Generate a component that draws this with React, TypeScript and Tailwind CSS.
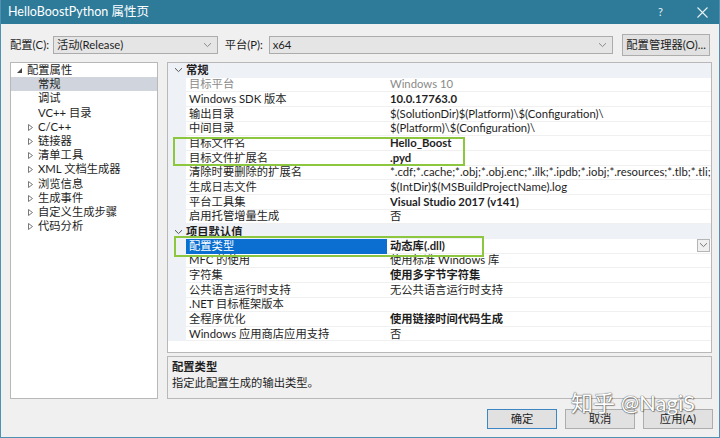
import React from "react";

const FONT = 'Lato, "Noto Sans CJK SC", sans-serif';

type Prop = { n: string; v: string; b?: boolean; g?: boolean; sel?: boolean };

const general: Prop[] = [
  { n: "目标平台", v: "Windows 10", g: true },
  { n: "Windows SDK 版本", v: "10.0.17763.0", b: true },
  { n: "输出目录", v: "$(SolutionDir)$(Platform)\\$(Configuration)\\" },
  { n: "中间目录", v: "$(Platform)\\$(Configuration)\\" },
  { n: "目标文件名", v: "Hello_Boost", b: true },
  { n: "目标文件扩展名", v: ".pyd", b: true },
  { n: "清除时要删除的扩展名", v: "*.cdf;*.cache;*.obj;*.obj.enc;*.ilk;*.ipdb;*.iobj;*.resources;*.tlb;*.tli;*.tlh;*.tmp;*.rsp" },
  { n: "生成日志文件", v: "$(IntDir)$(MSBuildProjectName).log" },
  { n: "平台工具集", v: "Visual Studio 2017 (v141)", b: true },
  { n: "启用托管增量生成", v: "否" },
];

const defaults: Prop[] = [
  { n: "配置类型", v: "动态库(.dll)", b: true, sel: true },
  { n: "MFC 的使用", v: "使用标准 Windows 库" },
  { n: "字符集", v: "使用多字节字符集", b: true },
  { n: "公共语言运行时支持", v: "无公共语言运行时支持" },
  { n: ".NET 目标框架版本", v: "" },
  { n: "全程序优化", v: "使用链接时间代码生成", b: true },
  { n: "Windows 应用商店应用支持", v: "否" },
];

function Chevron({ color = "#7a7a7a" }: { color?: string }) {
  return (
    <svg width="9" height="6" viewBox="0 0 9 6">
      <path d="M1 1.2 L4.5 4.6 L8 1.2" fill="none" stroke={color} strokeWidth="1" />
    </svg>
  );
}

function Header({ t }: { t: string }) {
  return (
    <div className="flex items-center h-[14.67px] bg-[#eef1f6] shrink-0">
      <div className="w-[18px] flex justify-center pl-[2px]">
        <Chevron color="#555" />
      </div>
      <span className="font-bold text-[#1e1e1e]">{t}</span>
    </div>
  );
}

function Row({ p }: { p: Prop }) {
  return (
    <div className="flex h-[14.67px] shrink-0">
      <div className="w-[18px] bg-[#eef1f6] shrink-0" />
      <div
        className={
          "w-[201px] shrink-0 pl-[3px] flex items-center whitespace-nowrap overflow-hidden border-b " +
          (p.sel ? "bg-[#0a6fd1] text-white border-[#0a6fd1]" : "border-[#f0f0f0] ") +
          (p.g ? "text-[#8a8a8a]" : p.sel ? "" : "text-[#1e1e1e]")
        }
      >
        {p.n}
      </div>
      <div
        className={
          "flex-1 min-w-0 pl-[3px] flex items-center whitespace-nowrap overflow-hidden border-b border-[#f0f0f0] relative " +
          (p.g ? "text-[#8a8a8a] " : "text-[#1e1e1e] ") +
          (p.b ? "font-bold" : "")
        }
      >
        {p.v}
        {p.sel && (
          <div className="absolute right-[1px] top-[0px] w-[13px] h-[13px] border border-[#b5b5b5] bg-[#f0f0f0] flex items-center justify-center">
            <Chevron color="#777" />
          </div>
        )}
      </div>
    </div>
  );
}

const tree: { t: string; kind: "open" | "closed" | "leaf"; sel?: boolean }[] = [
  { t: "配置属性", kind: "open" },
  { t: "常规", kind: "leaf", sel: true },
  { t: "调试", kind: "leaf" },
  { t: "VC++ 目录", kind: "leaf" },
  { t: "C/C++", kind: "closed" },
  { t: "链接器", kind: "closed" },
  { t: "清单工具", kind: "closed" },
  { t: "XML 文档生成器", kind: "closed" },
  { t: "浏览信息", kind: "closed" },
  { t: "生成事件", kind: "closed" },
  { t: "自定义生成步骤", kind: "closed" },
  { t: "代码分析", kind: "closed" },
];

function Btn({ t, def }: { t: string; def?: boolean }) {
  return (
    <div
      className={
        "w-[70px] h-[20px] flex items-center justify-center bg-[#e1e1e1] border " +
        (def ? "border-[#3c86c4]" : "border-[#adadad]")
      }
    >
      {t}
    </div>
  );
}

export default function App() {
  return (
    <div
      className="w-[720px] h-[438px] flex flex-col bg-[#f0f0f0] border-x border-b border-[#4d91b4] text-[11.3px] leading-[14px] text-[#1e1e1e] relative overflow-hidden"
      style={{ fontFamily: FONT }}
    >
      {/* Title bar */}
      <div className="h-[24px] shrink-0 bg-[#2d7b99] flex items-center text-white -mx-px">
        <span className="pl-[8px] text-[12.5px]">HelloBoostPython 属性页</span>
        <span className="ml-auto mr-[34px] text-[11px] text-[#e8f1f5]">?</span>
        <svg width="11" height="11" viewBox="0 0 11 11" className="mr-[12px]">
          <path d="M0.5 0.5 L10.5 10.5 M10.5 0.5 L0.5 10.5" stroke="#eaf2f6" strokeWidth="1.1" />
        </svg>
      </div>

      {/* Config row */}
      <div className="flex items-center h-[22px] mt-[10px] pl-[9px] pr-[9px] shrink-0">
        <span className="w-[43px]">配置(C):</span>
        <div className="w-[165px] h-[18px] bg-[#e5e5e5] border border-[#acacac] flex items-center pl-[3px] pr-[5px]">
          <span>活动(Release)</span>
          <span className="ml-auto"><Chevron color="#8a8a8a" /></span>
        </div>
        <span className="ml-[7px] w-[44px]">平台(P):</span>
        <div className="w-[345px] h-[18px] bg-[#e5e5e5] border border-[#acacac] flex items-center pl-[3px] pr-[5px]">
          <span>x64</span>
          <span className="ml-auto"><Chevron color="#8a8a8a" /></span>
        </div>
        <div className="ml-[9px] w-[88px] h-[22px] bg-[#e1e1e1] border border-[#adadad] flex items-center justify-center">
          配置管理器(O)...
        </div>
      </div>

      {/* Main */}
      <div className="flex mt-[6px] pl-[9px] h-[337px] shrink-0">
        {/* Tree */}
        <div className="w-[148px] h-full bg-white border border-[#b8b8b8] flex flex-col">
          {tree.map((it, i) => (
            <div
              key={i}
              className={"h-[14.2px] flex items-center shrink-0 relative " + (it.sel ? "bg-[#d0d4dd]" : "")}
            >
              {it.kind === "open" && (
                <>
                  <svg width="5" height="5" viewBox="0 0 5 5" className="absolute left-[6px] top-[5px]">
                    <path d="M5 0 L5 5 L0 5 Z" fill="#444" />
                  </svg>
                  <span className="absolute left-[16px] top-0">{it.t}</span>
                </>
              )}
              {it.kind === "closed" && (
                <>
                  <svg width="5" height="7" viewBox="0 0 5 7" className="absolute left-[17px] top-[4px]">
                    <path d="M0.5 0.5 L4.5 3.5 L0.5 6.5 Z" fill="none" stroke="#6a6a6a" strokeWidth="0.9" />
                  </svg>
                  <span className="absolute left-[27px] top-0">{it.t}</span>
                </>
              )}
              {it.kind === "leaf" && <span className="absolute left-[27px] top-0">{it.t}</span>}
            </div>
          ))}
        </div>

        {/* Right column */}
        <div className="ml-[9px] w-[545px] flex flex-col">
          <div className="h-[291px] bg-white border border-[#b8b8b8] flex flex-col relative overflow-hidden">
            <Header t="常规" />
            {general.map((p, i) => (
              <Row key={i} p={p} />
            ))}
            <Header t="项目默认值" />
            {defaults.map((p, i) => (
              <Row key={i} p={p} />
            ))}
            {/* highlight boxes */}
            <div className="absolute left-[5px] top-[74px] w-[292px] h-[29px] border-2 border-[#8dc63f]" />
            <div className="absolute left-[6px] top-[173px] w-[310px] h-[21px] border-2 border-[#8dc63f]" />
          </div>
          <div className="mt-[3px] flex-1 bg-[#f0f0f0] border border-[#b8b8b8] pl-[4px] pt-[2px]">
            <div className="font-bold leading-[16px]">配置类型</div>
            <div className="leading-[16px]">指定此配置生成的输出类型。</div>
          </div>
        </div>
      </div>

      {/* Buttons */}
      <div className="flex justify-end gap-[8px] mt-[10px] pr-[6px]">
        <Btn t="确定" def />
        <Btn t="取消" />
        <Btn t="应用(A)" />
      </div>

      {/* Watermark */}
      <div
        className="absolute left-[570px] top-[392px] text-[22px] text-white leading-none"
        style={{ textShadow: "0 0 1px #555, 0 0 1px #555, 1px 1px 1px rgba(0,0,0,0.35)" }}
      >
        知乎 @NagiS
      </div>
    </div>
  );
}
